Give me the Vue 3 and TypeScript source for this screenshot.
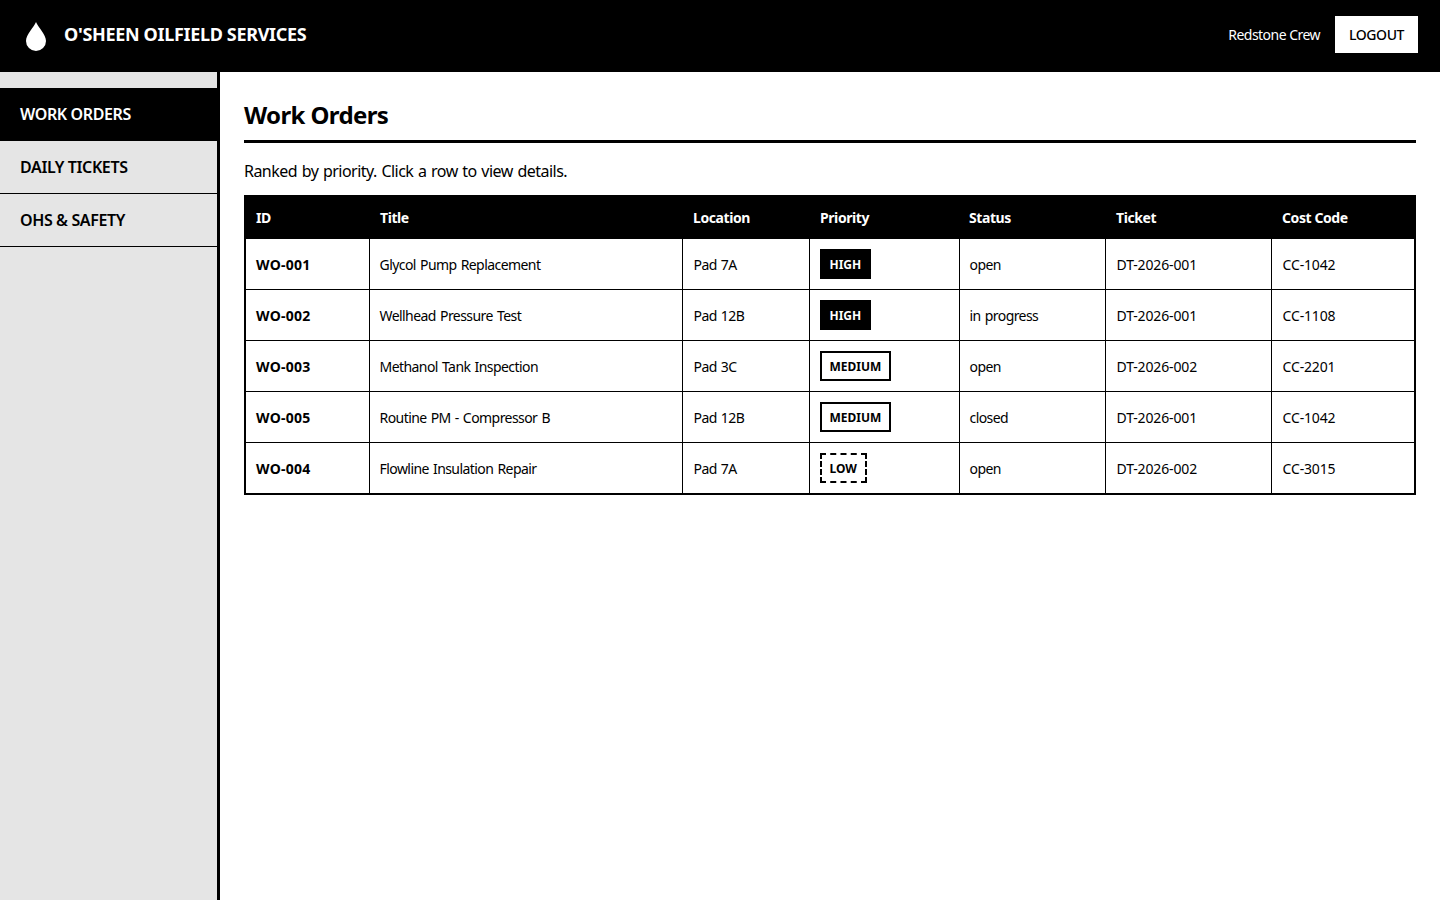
<template>
  <div class="app">
    <header class="topbar">
      <div class="brand">
        <svg class="drop" width="20" height="29" viewBox="0 0 20 29">
          <path d="M10 0 C8 5 0 12.5 0 19 a10 10 0 0 0 20 0 C20 12.5 12 5 10 0 Z" fill="#fff" />
        </svg>
        <span class="brand-name">O'SHEEN OILFIELD SERVICES</span>
      </div>
      <div class="user">
        <span class="crew">Redstone Crew</span>
        <button class="logout">LOGOUT</button>
      </div>
    </header>
    <div class="body">
      <nav class="sidebar">
        <a
          v-for="item in navItems"
          :key="item"
          :class="['nav-item', { active: item === 'WORK ORDERS' }]"
        >{{ item }}</a>
      </nav>
      <main class="content">
        <h1>Work Orders</h1>
        <p class="hint">Ranked by priority. Click a row to view details.</p>
        <table>
          <colgroup>
            <col v-for="w in colWidths" :key="w" :style="{ width: w + 'px' }" />
          </colgroup>
          <thead>
            <tr>
              <th v-for="h in headers" :key="h">{{ h }}</th>
            </tr>
          </thead>
          <tbody>
            <tr v-for="row in rows" :key="row.id">
              <td class="id">{{ row.id }}</td>
              <td>{{ row.title }}</td>
              <td class="loc">{{ row.location }}</td>
              <td class="pri"><span :class="['badge', row.priority.toLowerCase()]">{{ row.priority }}</span></td>
              <td>{{ row.status }}</td>
              <td class="code">{{ row.ticket }}</td>
              <td class="code">{{ row.cost }}</td>
            </tr>
          </tbody>
        </table>
      </main>
    </div>
  </div>
</template>

<script setup lang="ts">
interface WorkOrder {
  id: string
  title: string
  location: string
  priority: 'HIGH' | 'MEDIUM' | 'LOW'
  status: string
  ticket: string
  cost: string
}

const navItems = ['WORK ORDERS', 'DAILY TICKETS', 'OHS & SAFETY']
const headers = ['ID', 'Title', 'Location', 'Priority', 'Status', 'Ticket', 'Cost Code']
const colWidths = [124, 313, 127, 150, 146, 166, 144]

const rows: WorkOrder[] = [
  { id: 'WO-001', title: 'Glycol Pump Replacement', location: 'Pad 7A', priority: 'HIGH', status: 'open', ticket: 'DT-2026-001', cost: 'CC-1042' },
  { id: 'WO-002', title: 'Wellhead Pressure Test', location: 'Pad 12B', priority: 'HIGH', status: 'in progress', ticket: 'DT-2026-001', cost: 'CC-1108' },
  { id: 'WO-003', title: 'Methanol Tank Inspection', location: 'Pad 3C', priority: 'MEDIUM', status: 'open', ticket: 'DT-2026-002', cost: 'CC-2201' },
  { id: 'WO-005', title: 'Routine PM - Compressor B', location: 'Pad 12B', priority: 'MEDIUM', status: 'closed', ticket: 'DT-2026-001', cost: 'CC-1042' },
  { id: 'WO-004', title: 'Flowline Insulation Repair', location: 'Pad 7A', priority: 'LOW', status: 'open', ticket: 'DT-2026-002', cost: 'CC-3015' },
]
</script>

<style>
html,
body {
  margin: 0;
  background: #fff;
}
</style>

<style scoped>
.app {
  height: 900px;
  display: flex;
  flex-direction: column;
  font-family: "Noto Sans", sans-serif;
  color: #000;
  overflow: hidden;
}

.topbar {
  height: 72px;
  box-sizing: border-box;
  flex: none;
  background: #000;
  color: #fff;
  border-bottom: 3px solid #000;
  display: flex;
  align-items: center;
  justify-content: space-between;
  padding: 0 22px 0 26px;
}

.brand {
  display: flex;
  align-items: center;
  gap: 18px;
}

.drop {
  margin-top: 4px;
}

.brand-name {
  font-size: 18px;
  font-weight: 700;
  letter-spacing: -0.018em;
  padding-bottom: 1px;
}

.user {
  display: flex;
  align-items: center;
  gap: 15px;
}

.crew {
  font-size: 14px;
  letter-spacing: -0.038em;
}

.logout {
  background: #fff;
  color: #000;
  border: 2px solid #fff;
  padding: 8px 12px;
  font-family: inherit;
  font-size: 14px;
  line-height: 17px;
  font-weight: 500;
  letter-spacing: -0.03em;
}

.body {
  flex: 1;
  display: flex;
}

.sidebar {
  width: 217px;
  flex: none;
  background: #e5e5e5;
  border-right: 3px solid #000;
  padding-top: 16px;
}

.nav-item {
  display: block;
  height: 52px;
  line-height: 52px;
  padding-left: 20px;
  font-size: 16px;
  font-weight: 600;
  letter-spacing: -0.024em;
  border-bottom: 1px solid #000;
}

.nav-item.active {
  background: #000;
  color: #fff;
}

.content {
  flex: 1;
  padding: 24px;
}

h1 {
  margin: 0 0 16px;
  padding-bottom: 6px;
  font-size: 24px;
  line-height: 38px;
  font-weight: 700;
  letter-spacing: -0.026em;
  border-bottom: 3px solid #000;
}

.hint {
  margin: 0 0 12px;
  font-size: 16px;
  line-height: 24px;
  letter-spacing: -0.033em;
  word-spacing: 1px;
}

table {
  width: 100%;
  border-collapse: collapse;
  border: 2px solid #000;
  table-layout: fixed;
  font-size: 14px;
}

th {
  background: #000;
  color: #fff;
  text-align: left;
  padding: 10px;
  font-weight: 700;
  line-height: 21px;
  letter-spacing: -0.03em;
}

th:nth-child(n + 2):not(:nth-child(5)) {
  padding-left: 11px;
}

td {
  padding: 11px 10px 9px;
  border: 1px solid #000;
  line-height: 20px;
  height: 30px;
  letter-spacing: -0.04em;
  word-spacing: 1px;
}

td.id {
  font-weight: 700;
  letter-spacing: 0.02em;
}

td.loc,
td.code {
  padding-left: 11px;
}

td.code {
  letter-spacing: -0.01em;
}

td.pri {
  padding: 10px;
}

.badge {
  display: inline-block;
  font-size: 12px;
  font-weight: 700;
  line-height: 18px;
  letter-spacing: 0;
  padding: 5px 8px 3px;
  border: 2px solid #000;
}

.badge.high {
  background: #000;
  color: #fff;
}

.badge.low {
  border-style: dashed;
}
</style>
